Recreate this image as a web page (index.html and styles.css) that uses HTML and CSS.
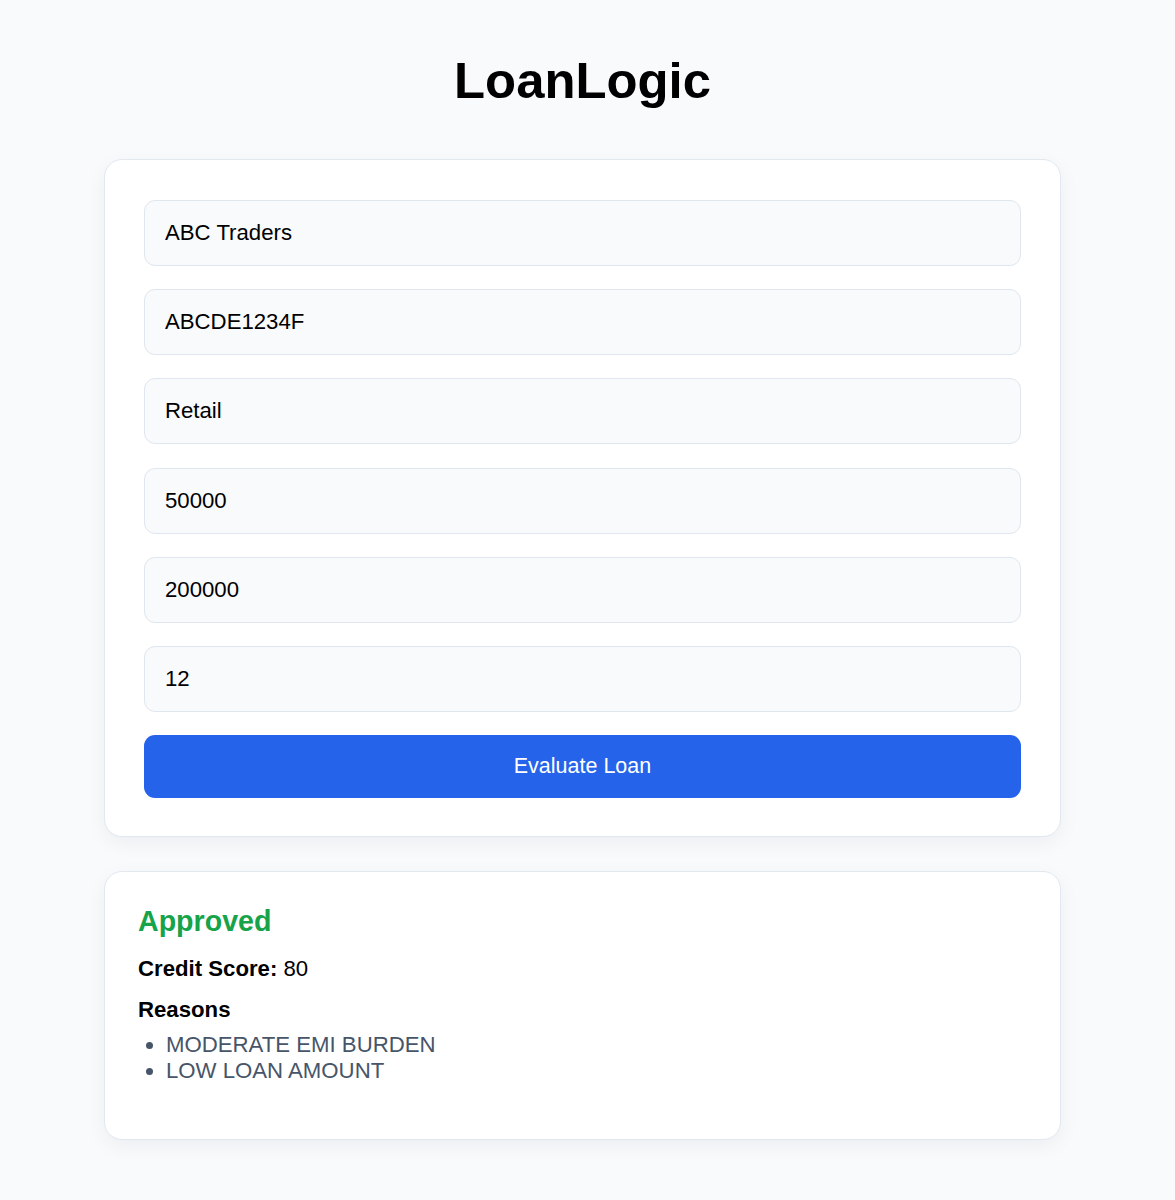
FILE: index.html
```html
<!DOCTYPE html>
<html lang="en">
<head>
<meta charset="utf-8">
<title>LoanLogic</title>
<link rel="stylesheet" href="styles.css">
</head>
<body>
<main class="app">
  <h1 class="title">LoanLogic</h1>
  <form class="card form-card">
    <input class="field" type="text" value="ABC Traders">
    <input class="field" type="text" value="ABCDE1234F">
    <input class="field" type="text" value="Retail">
    <input class="field" type="text" value="50000">
    <input class="field" type="text" value="200000">
    <input class="field" type="text" value="12">
    <button class="submit" type="button">Evaluate Loan</button>
  </form>
  <section class="card result-card">
    <h2 class="status">Approved</h2>
    <p class="score"><strong>Credit Score:</strong> 80</p>
    <h3 class="reasons-title">Reasons</h3>
    <ul class="reasons">
      <li>MODERATE EMI BURDEN</li>
      <li>LOW LOAN AMOUNT</li>
    </ul>
  </section>
</main>
</body>
</html>
```
FILE: styles.css
```css
* { box-sizing: border-box; }

html, body {
  margin: 0;
  background: #f8fafc;
}

body {
  font-family: "Liberation Sans", Arial, sans-serif;
  color: #000;
  padding: 0 10px 40px 0;
}

.app {
  width: 957px;
  margin: 0 auto;
  display: flex;
  flex-direction: column;
}

.title {
  margin: 52px 0 50px;
  font-size: 50.8px;
  font-weight: 700;
  line-height: 57px;
  text-align: center;
}

.card {
  background: #fff;
  border: 1px solid #e2e8f0;
  border-radius: 18px;
  box-shadow: 0 6px 20px rgba(15, 23, 42, 0.05);
}

.form-card {
  padding: 39.5px 39px 38px;
  display: flex;
  flex-direction: column;
  gap: 23.4px;
}

.field {
  display: block;
  width: 100%;
  height: 66px;
  padding: 0 20px;
  font-family: "Liberation Sans", Arial, sans-serif;
  font-size: 22.2px;
  color: #000;
  background: #f8fafc;
  border: 1.5px solid #e0e6ef;
  border-radius: 11px;
  outline: none;
}

.submit {
  display: block;
  width: 100%;
  height: 63px;
  margin-top: -0.4px;
  font-family: "Liberation Sans", Arial, sans-serif;
  font-size: 21.5px;
  color: #fff;
  background: #2563eb;
  border: none;
  border-radius: 11px;
  cursor: pointer;
}

.result-card {
  margin-top: 34px;
  padding: 33px 33px 33px;
}

.status {
  margin: 0;
  font-size: 28.6px;
  line-height: 32px;
  font-weight: 700;
  color: #16a34a;
}

.score {
  margin: 19px 0 0;
  font-size: 22.2px;
  line-height: 25px;
}

.reasons-title {
  margin: 16px 0 0;
  font-size: 22.2px;
  line-height: 25px;
  font-weight: 700;
}

.reasons {
  margin: 10px 0 22px;
  padding-left: 28px;
  color: #475569;
  font-size: 22.2px;
  line-height: 26px;
}
```
